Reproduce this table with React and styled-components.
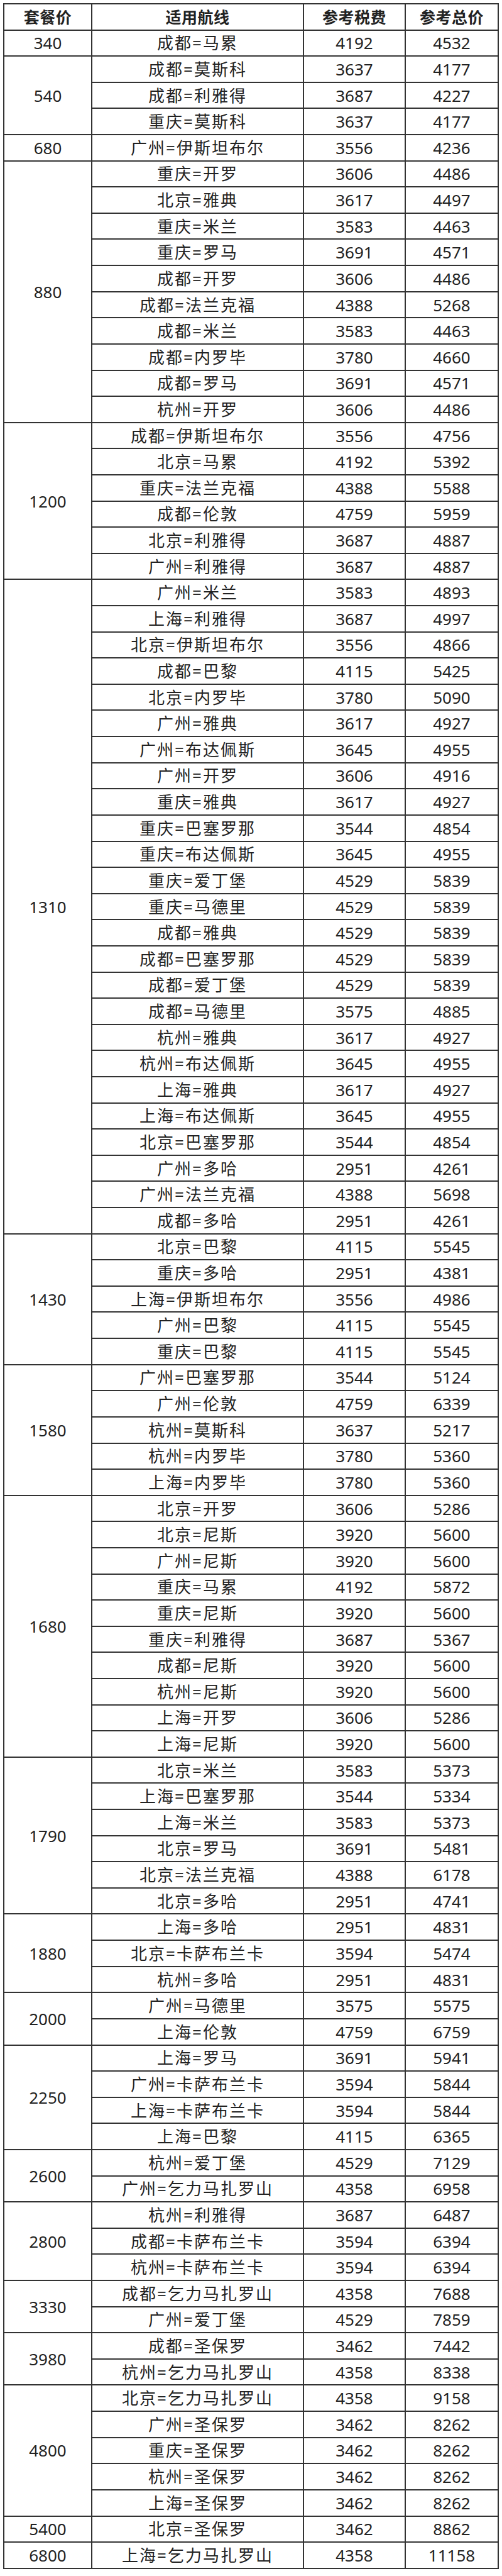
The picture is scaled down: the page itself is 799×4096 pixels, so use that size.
import React from 'react';
import styled, { createGlobalStyle } from 'styled-components';

const groups = [
  { price: '340', routes: [['成都=马累', '4192', '4532']] },
  { price: '540', routes: [
    ['成都=莫斯科', '3637', '4177'],
    ['成都=利雅得', '3687', '4227'],
    ['重庆=莫斯科', '3637', '4177'],
  ] },
  { price: '680', routes: [['广州=伊斯坦布尔', '3556', '4236']] },
  { price: '880', routes: [
    ['重庆=开罗', '3606', '4486'],
    ['北京=雅典', '3617', '4497'],
    ['重庆=米兰', '3583', '4463'],
    ['重庆=罗马', '3691', '4571'],
    ['成都=开罗', '3606', '4486'],
    ['成都=法兰克福', '4388', '5268'],
    ['成都=米兰', '3583', '4463'],
    ['成都=内罗毕', '3780', '4660'],
    ['成都=罗马', '3691', '4571'],
    ['杭州=开罗', '3606', '4486'],
  ] },
  { price: '1200', routes: [
    ['成都=伊斯坦布尔', '3556', '4756'],
    ['北京=马累', '4192', '5392'],
    ['重庆=法兰克福', '4388', '5588'],
    ['成都=伦敦', '4759', '5959'],
    ['北京=利雅得', '3687', '4887'],
    ['广州=利雅得', '3687', '4887'],
  ] },
  { price: '1310', routes: [
    ['广州=米兰', '3583', '4893'],
    ['上海=利雅得', '3687', '4997'],
    ['北京=伊斯坦布尔', '3556', '4866'],
    ['成都=巴黎', '4115', '5425'],
    ['北京=内罗毕', '3780', '5090'],
    ['广州=雅典', '3617', '4927'],
    ['广州=布达佩斯', '3645', '4955'],
    ['广州=开罗', '3606', '4916'],
    ['重庆=雅典', '3617', '4927'],
    ['重庆=巴塞罗那', '3544', '4854'],
    ['重庆=布达佩斯', '3645', '4955'],
    ['重庆=爱丁堡', '4529', '5839'],
    ['重庆=马德里', '4529', '5839'],
    ['成都=雅典', '4529', '5839'],
    ['成都=巴塞罗那', '4529', '5839'],
    ['成都=爱丁堡', '4529', '5839'],
    ['成都=马德里', '3575', '4885'],
    ['杭州=雅典', '3617', '4927'],
    ['杭州=布达佩斯', '3645', '4955'],
    ['上海=雅典', '3617', '4927'],
    ['上海=布达佩斯', '3645', '4955'],
    ['北京=巴塞罗那', '3544', '4854'],
    ['广州=多哈', '2951', '4261'],
    ['广州=法兰克福', '4388', '5698'],
    ['成都=多哈', '2951', '4261'],
  ] },
  { price: '1430', routes: [
    ['北京=巴黎', '4115', '5545'],
    ['重庆=多哈', '2951', '4381'],
    ['上海=伊斯坦布尔', '3556', '4986'],
    ['广州=巴黎', '4115', '5545'],
    ['重庆=巴黎', '4115', '5545'],
  ] },
  { price: '1580', routes: [
    ['广州=巴塞罗那', '3544', '5124'],
    ['广州=伦敦', '4759', '6339'],
    ['杭州=莫斯科', '3637', '5217'],
    ['杭州=内罗毕', '3780', '5360'],
    ['上海=内罗毕', '3780', '5360'],
  ] },
  { price: '1680', routes: [
    ['北京=开罗', '3606', '5286'],
    ['北京=尼斯', '3920', '5600'],
    ['广州=尼斯', '3920', '5600'],
    ['重庆=马累', '4192', '5872'],
    ['重庆=尼斯', '3920', '5600'],
    ['重庆=利雅得', '3687', '5367'],
    ['成都=尼斯', '3920', '5600'],
    ['杭州=尼斯', '3920', '5600'],
    ['上海=开罗', '3606', '5286'],
    ['上海=尼斯', '3920', '5600'],
  ] },
  { price: '1790', routes: [
    ['北京=米兰', '3583', '5373'],
    ['上海=巴塞罗那', '3544', '5334'],
    ['上海=米兰', '3583', '5373'],
    ['北京=罗马', '3691', '5481'],
    ['北京=法兰克福', '4388', '6178'],
    ['北京=多哈', '2951', '4741'],
  ] },
  { price: '1880', routes: [
    ['上海=多哈', '2951', '4831'],
    ['北京=卡萨布兰卡', '3594', '5474'],
    ['杭州=多哈', '2951', '4831'],
  ] },
  { price: '2000', routes: [
    ['广州=马德里', '3575', '5575'],
    ['上海=伦敦', '4759', '6759'],
  ] },
  { price: '2250', routes: [
    ['上海=罗马', '3691', '5941'],
    ['广州=卡萨布兰卡', '3594', '5844'],
    ['上海=卡萨布兰卡', '3594', '5844'],
    ['上海=巴黎', '4115', '6365'],
  ] },
  { price: '2600', routes: [
    ['杭州=爱丁堡', '4529', '7129'],
    ['广州=乞力马扎罗山', '4358', '6958'],
  ] },
  { price: '2800', routes: [
    ['杭州=利雅得', '3687', '6487'],
    ['成都=卡萨布兰卡', '3594', '6394'],
    ['杭州=卡萨布兰卡', '3594', '6394'],
  ] },
  { price: '3330', routes: [
    ['成都=乞力马扎罗山', '4358', '7688'],
    ['广州=爱丁堡', '4529', '7859'],
  ] },
  { price: '3980', routes: [
    ['成都=圣保罗', '3462', '7442'],
    ['杭州=乞力马扎罗山', '4358', '8338'],
  ] },
  { price: '4800', routes: [
    ['北京=乞力马扎罗山', '4358', '9158'],
    ['广州=圣保罗', '3462', '8262'],
    ['重庆=圣保罗', '3462', '8262'],
    ['杭州=圣保罗', '3462', '8262'],
    ['上海=圣保罗', '3462', '8262'],
  ] },
  { price: '5400', routes: [['北京=圣保罗', '3462', '8862']] },
  { price: '6800', routes: [['上海=乞力马扎罗山', '4358', '11158']] },
];

const GlobalStyle = createGlobalStyle`
  body {
    margin: 0;
    background: #ffffff;
    font-family: "Noto Sans", "Noto Sans CJK SC", sans-serif;
    color: #222222;
  }
`;

function App() {
  return (
    <>
      <GlobalStyle />
      <Page>
        <FareTable>
          <HeadCell>套餐价</HeadCell>
          <HeadCell>适用航线</HeadCell>
          <HeadCell>参考税费</HeadCell>
          <HeadCell>参考总价</HeadCell>

          {groups.map((g) => (
            <React.Fragment key={g.price}>
              <PriceCell $rows={g.routes.length}>{g.price}</PriceCell>
              {g.routes.map(([route, tax, total]) => (
                <React.Fragment key={route}>
                  <RouteCell>{route}</RouteCell>
                  <NumCell>{tax}</NumCell>
                  <NumCell>{total}</NumCell>
                </React.Fragment>
              ))}
            </React.Fragment>
          ))}
        </FareTable>
      </Page>
    </>
  );
}

export default App;

const Page = styled.div`
  padding: 5px 0 0 5px;
  width: 799px;
  box-sizing: border-box;
`;

const FareTable = styled.div`
  display: grid;
  width: 789px;
  box-sizing: border-box;
  grid-template-columns: 138px 335px 160px 146px;
  grid-auto-rows: 39.61px;
  gap: 2px;
  padding: 2px;
  background: #333333;
`;

const Cell = styled.div`
  display: flex;
  align-items: center;
  justify-content: center;
  background: #ffffff;
  font-size: 26px;
  line-height: 1;
  white-space: nowrap;
`;

const HeadCell = styled(Cell)`
  font-family: "Noto Sans CJK SC", sans-serif;
  font-size: 25px;
  font-weight: 700;
  letter-spacing: 0.5px;
`;

const PriceCell = styled(Cell)`
  grid-column: 1;
  grid-row: span ${(p) => p.$rows};
`;

const RouteCell = styled(Cell)`
  grid-column: 2;
  letter-spacing: 2px;
`;

const NumCell = styled(Cell)``;
